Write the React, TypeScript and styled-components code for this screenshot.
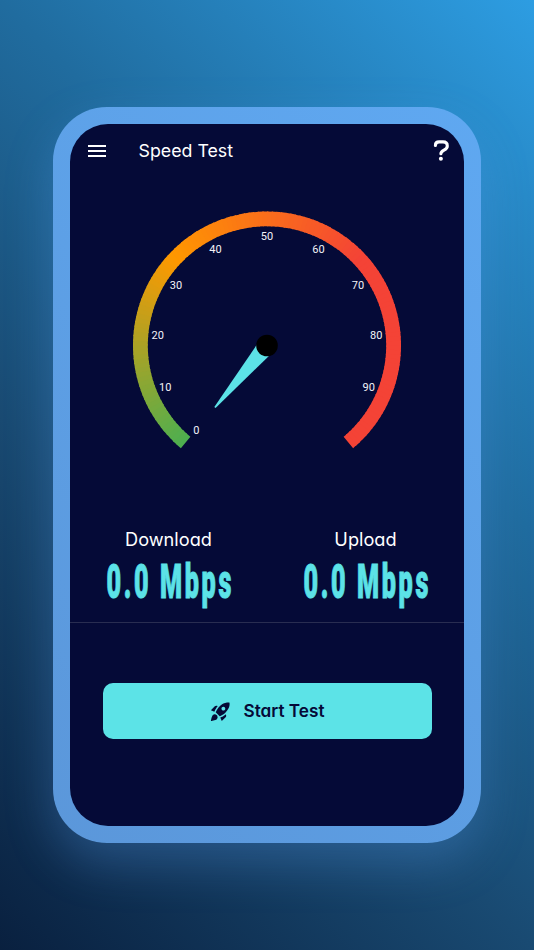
import React from 'react';
import styled, { createGlobalStyle } from 'styled-components';
import { MdMenu, MdRocketLaunch } from 'react-icons/md';

const GlobalStyle = createGlobalStyle`
  * { box-sizing: border-box; }
  html, body { margin: 0; padding: 0; }
`;

const Page = styled.main`
  display: flex;
  justify-content: center;
  width: 534px;
  height: 950px;
  padding-top: 107px;
  overflow: hidden;
  background: linear-gradient(45deg, #09203f 0%, #194a72 36%, #206c9f 64%, #2d9de2 100%);
  font-family: Inter, 'Open Sans', sans-serif;
  font-feature-settings: 'cv11' 1;
`;

const Frame = styled.section`
  width: 428px;
  height: 736px;
  padding: 17px;
  border-radius: 54px;
  background: linear-gradient(45deg, #5b97da 0%, #5fa8f1 100%);
  box-shadow: 0 20px 48px rgba(96, 165, 250, 0.27);
`;

const Screen = styled.div`
  display: flex;
  flex-direction: column;
  width: 394px;
  height: 702px;
  overflow: hidden;
  border-radius: 38px;
  background: #050a37;
  color: #fff;
`;

const Header = styled.header`
  display: flex;
  align-items: center;
  height: 53px;
  padding: 0 10px 0 14.5px;
`;

const Title = styled.h1`
  flex: 1;
  margin: 0 0 0 30px;
  font-size: 17.8px;
  font-weight: 400;
  line-height: 24px;
`;

const IconButton = styled.button`
  display: flex;
  padding: 0;
  border: 0;
  background: none;
  color: #fff;
`;

const GaugeArea = styled.div`
  height: 350px;
`;

const TickLabel = styled.text`
  font-family: Roboto, sans-serif;
  font-size: 11px;
  fill: #f3f3f7;
  text-anchor: middle;
`;

const Readings = styled.div`
  display: grid;
  grid-template-columns: repeat(2, minmax(0, 1fr));
  height: 96px;
  border-bottom: 1px solid #292d51;
`;

const Reading = styled.div`
  display: flex;
  flex-direction: column;
  align-items: center;
`;

const ReadingLabel = styled.div`
  font-size: 18.2px;
  line-height: 24px;
`;

const ReadingValue = styled.div`
  margin-top: 6px;
  padding-left: 5px;
  font-family: Roboto, sans-serif;
  font-size: 47.5px;
  font-weight: 900;
  line-height: 50px;
  letter-spacing: 5px;
  white-space: nowrap;
  color: #5ce2e7;
  -webkit-text-stroke: 1px #5ce2e7;
  transform: scaleX(0.53);
`;

const Actions = styled.div`
  display: flex;
  justify-content: center;
  padding-top: 60px;
`;

const StartButton = styled.button`
  display: flex;
  align-items: center;
  justify-content: center;
  gap: 11px;
  width: 329px;
  height: 56px;
  padding: 0;
  border: 0;
  border-radius: 10px;
  background: #5ce3e7;
  color: #050a37;
  font: 600 17.2px/24px Inter, sans-serif;
  font-feature-settings: 'cv11' 1;
`;

const CX = 197;
const CY = 168.5;
const START = 130;
const SWEEP = 280;
const STEPS = 140;

const GREEN = [76, 175, 80];
const ORANGE = [255, 152, 0];
const RED = [244, 67, 54];

const polar = (radius: number, degrees: number) => {
  const a = (degrees * Math.PI) / 180;
  return [CX + radius * Math.cos(a), CY + radius * Math.sin(a)];
};

const blend = (from: number[], to: number[], t: number) =>
  `rgb(${from.map((c, i) => Math.round(c + (to[i] - c) * t)).join(',')})`;

const arcColor = (t: number) =>
  t < 1 / 3 ? blend(GREEN, ORANGE, t * 3) : blend(ORANGE, RED, Math.min(1, (t - 1 / 3) * 3));

const segments = Array.from({ length: STEPS }, (_, i) => {
  const from = START + (i * SWEEP) / STEPS;
  const to = Math.min(START + SWEEP, from + SWEEP / STEPS + 0.6);
  const [x1, y1] = polar(126.6, from);
  const [x2, y2] = polar(126.6, to);
  return { d: `M${x1} ${y1}A126.6 126.6 0 0 1 ${x2} ${y2}`, color: arcColor((i + 0.5) / STEPS) };
});

const ticks = Array.from({ length: 10 }, (_, i) => {
  const [x, y] = polar(109.8, START + i * 28);
  return { value: i * 10, x, y };
});

const Gauge = () => (
  <svg width="394" height="350" viewBox="0 0 394 350">
    {segments.map((s, i) => (
      <path key={i} d={s.d} stroke={s.color} strokeWidth="14.8" fill="none" />
    ))}
    {ticks.map((t) => (
      <TickLabel key={t.value} x={t.x} y={t.y + 4.6}>
        {t.value}
      </TickLabel>
    ))}
    <g transform={`translate(${CX} ${CY}) rotate(${START})`}>
      <path d="M0 -8.9L81 -0.8V0.8L0 8.9Z" fill="#5ce2e7" />
    </g>
    <circle cx={CX} cy={CY} r="10.8" fill="#000" />
  </svg>
);

const HelpIcon = () => (
  <svg width="24" height="24" viewBox="0 0 24 24" fill="none">
    <path
      d="M5.4 6.4C5.4 4.2 6.8 2.9 9.1 2.9H13C15.8 2.9 17.3 4.5 17.3 6.9C17.3 11.7 11 10.4 10.9 14.7"
      stroke="currentColor"
      strokeWidth="3.1"
      strokeLinecap="round"
    />
    <circle cx="10.9" cy="19.8" r="2" fill="currentColor" />
  </svg>
);

const readings = [
  { label: 'Download', value: '0.0 Mbps' },
  { label: 'Upload', value: '0.0 Mbps' },
];

export default function App() {
  return (
    <>
      <GlobalStyle />
      <Page>
        <Frame>
          <Screen>
            <Header>
              <IconButton aria-label="Menu">
                <MdMenu size={24} />
              </IconButton>
              <Title>Speed Test</Title>
              <IconButton aria-label="Help">
                <HelpIcon />
              </IconButton>
            </Header>
            <GaugeArea>
              <Gauge />
            </GaugeArea>
            <Readings>
              {readings.map((r) => (
                <Reading key={r.label}>
                  <ReadingLabel>{r.label}</ReadingLabel>
                  <ReadingValue>{r.value}</ReadingValue>
                </Reading>
              ))}
            </Readings>
            <Actions>
              <StartButton>
                <MdRocketLaunch size={23} />
                Start Test
              </StartButton>
            </Actions>
          </Screen>
        </Frame>
      </Page>
    </>
  );
}
